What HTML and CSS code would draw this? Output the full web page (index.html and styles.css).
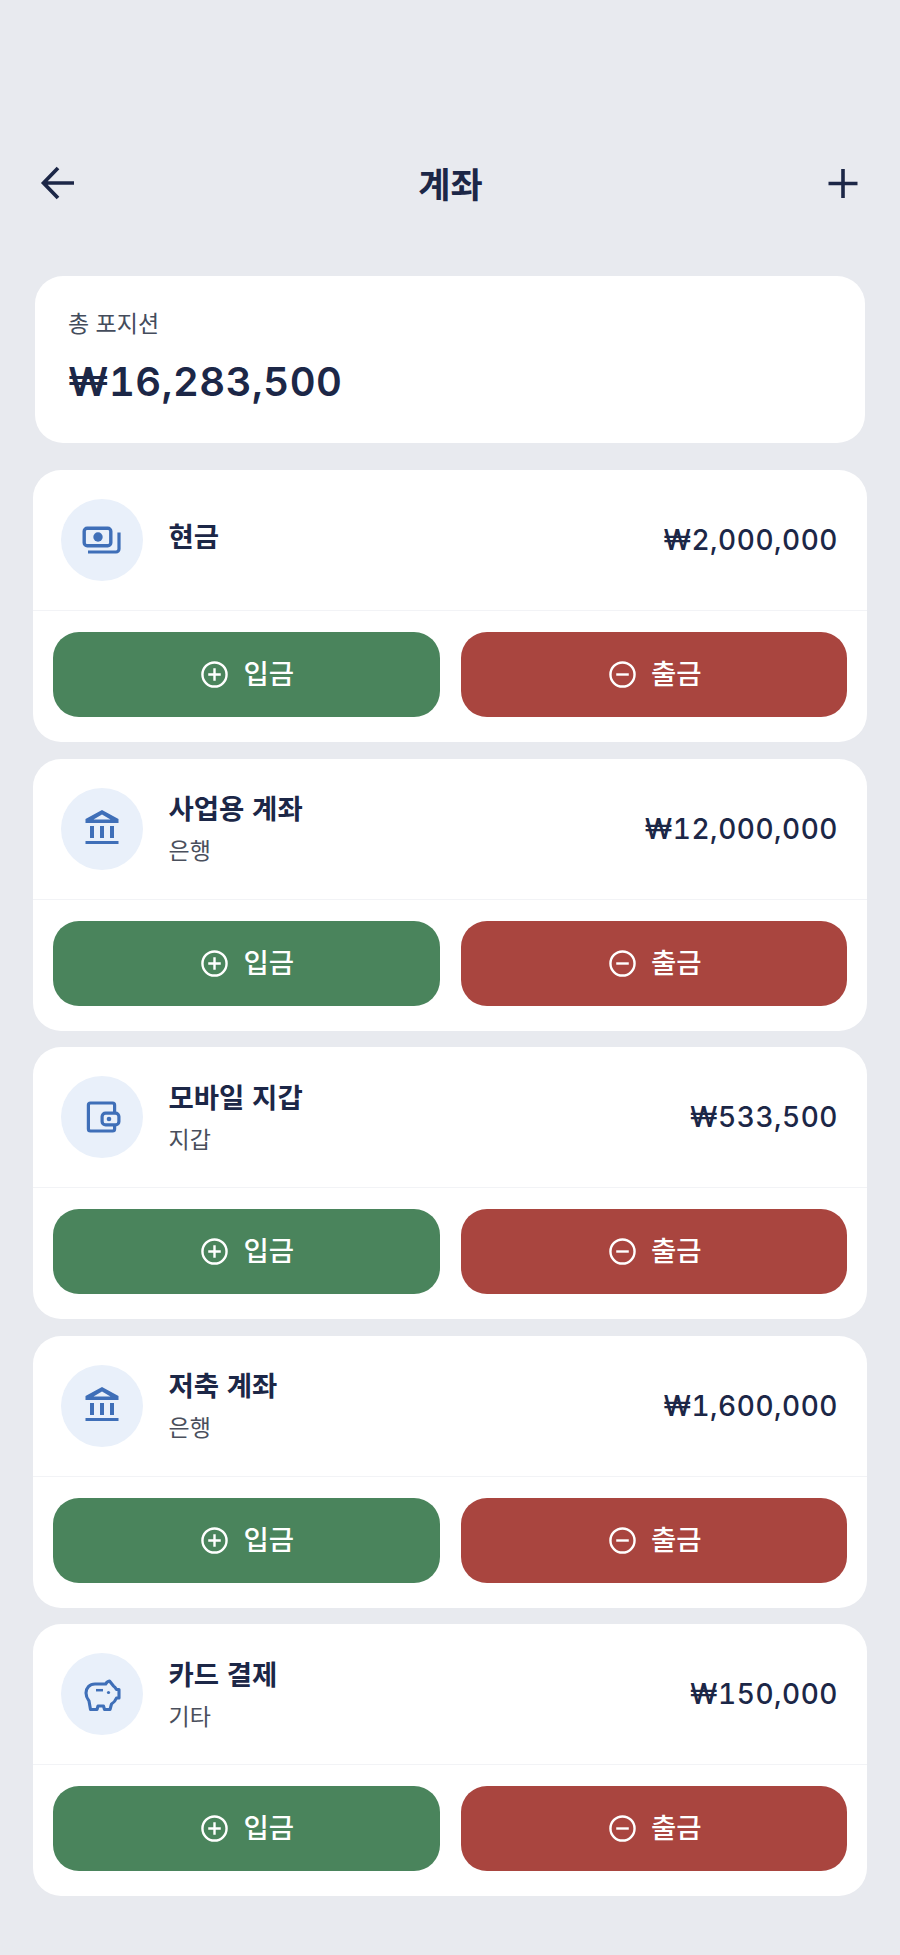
FILE: index.html
```html
<!DOCTYPE html>
<html lang="ko">
<head>
    <meta charset="UTF-8">
    <meta name="viewport" content="width=device-width, initial-scale=1.0">
    <title>계좌</title>
    <link rel="stylesheet" href="styles.css">
</head>
<body>

    <!-- Icons -->
    <svg class="icon-defs" aria-hidden="true">
        <symbol id="i-cash" viewBox="0 0 40 40">
            <rect x="2.200" y="8.200" width="26.600" height="17.600" rx="3" fill="none" stroke="currentColor" stroke-width="3.400"/>
            <circle cx="16" cy="17" r="4.700" fill="currentColor"/>
            <path d="M37 12.500V29a3 3 0 0 1-3 3H6" fill="none" stroke="currentColor" stroke-width="3.200"/>
        </symbol>
        <symbol id="i-bank" viewBox="0 0 40 40">
            <path d="M20 1 36.500 10v4h-33v-4z M20 5.500 11.500 10.500h17z" fill="currentColor" fill-rule="evenodd"/>
            <path d="M10 17v12M20 17v12M30 17v12" fill="none" stroke="currentColor" stroke-width="4"/>
            <path d="M3.500 33.500h33" fill="none" stroke="currentColor" stroke-width="3.200"/>
        </symbol>
        <symbol id="i-wallet" viewBox="0 0 40 40">
            <path d="M32.600 16V8a2 2 0 0 0-2-2H8.400a2 2 0 0 0-2 2v24a2 2 0 0 0 2 2h22.200a2 2 0 0 0 2-2v-4" fill="none" stroke="currentColor" stroke-width="3.200"/>
            <rect x="20.100" y="16.100" width="16.800" height="11.800" rx="3.500" fill="none" stroke="currentColor" stroke-width="3.200"/>
            <circle cx="27" cy="22" r="2.300" fill="currentColor"/>
        </symbol>
        <symbol id="i-piggy" viewBox="0 0 40 40">
            <path d="M27.500 7c-1.500.2-3 1.300-3.800 3H13C7.500 10 4 14 4 19c0 3.500 1.500 6 3 8l1.500 8.500H15l1-3.500h5.500l1 3.500H28l1.500-5.500c2.500-1.500 4-3.500 5-6H37v-8.500h-2.500c-.8-1.500-1.500-2.500-3-3.500z" fill="none" stroke="currentColor" stroke-width="3.100" stroke-linejoin="round"/>
            <path d="M14 16.200h7" fill="none" stroke="currentColor" stroke-width="2.500"/>
            <circle cx="26.500" cy="18.500" r="1.600" fill="currentColor"/>
        </symbol>
        <symbol id="i-plus" viewBox="0 0 28 28">
            <circle cx="14" cy="14" r="12.500" fill="none" stroke="currentColor" stroke-width="2.500"/>
            <path d="M14 7.500v13M7.500 14h13" fill="none" stroke="currentColor" stroke-width="2.500"/>
        </symbol>
        <symbol id="i-minus" viewBox="0 0 28 28">
            <circle cx="14" cy="14" r="12.500" fill="none" stroke="currentColor" stroke-width="2.500"/>
            <path d="M7.500 14h13" fill="none" stroke="currentColor" stroke-width="2.500"/>
        </symbol>
    </svg>

    <!-- Header -->
    <header class="top-bar">
        <svg class="top-icon" viewBox="0 0 36 36" aria-hidden="true">
            <path d="M34 18H4M18 3 3.500 18 18 33" fill="none" stroke="currentColor" stroke-width="3.700"/>
        </svg>
        <h1 class="top-title">계좌</h1>
        <svg class="top-icon" viewBox="0 0 36 36" aria-hidden="true">
            <path d="M18 4v29M3.500 18.500h29" fill="none" stroke="currentColor" stroke-width="3.600"/>
        </svg>
    </header>

    <!-- Total -->
    <section class="summary">
        <p class="summary-label">총 포지션</p>
        <p class="summary-value">₩16,283,500</p>
    </section>

    <!-- Accounts -->
    <main class="accounts">
        <article class="account">
            <div class="account-row">
                <span class="account-icon"><svg><use href="#i-cash"/></svg></span>
                <div class="account-info account-info-single">
                    <h2 class="account-name">현금</h2>
                </div>
                <span class="account-amount">₩2,000,000</span>
            </div>
            <div class="account-actions">
                <button class="btn btn-in"><svg><use href="#i-plus"/></svg><span class="btn-text">입금</span></button>
                <button class="btn btn-out"><svg><use href="#i-minus"/></svg><span class="btn-text">출금</span></button>
            </div>
        </article>

        <article class="account">
            <div class="account-row">
                <span class="account-icon"><svg><use href="#i-bank"/></svg></span>
                <div class="account-info">
                    <h2 class="account-name">사업용 계좌</h2>
                    <p class="account-type">은행</p>
                </div>
                <span class="account-amount">₩12,000,000</span>
            </div>
            <div class="account-actions">
                <button class="btn btn-in"><svg><use href="#i-plus"/></svg><span class="btn-text">입금</span></button>
                <button class="btn btn-out"><svg><use href="#i-minus"/></svg><span class="btn-text">출금</span></button>
            </div>
        </article>

        <article class="account">
            <div class="account-row">
                <span class="account-icon"><svg><use href="#i-wallet"/></svg></span>
                <div class="account-info">
                    <h2 class="account-name">모바일 지갑</h2>
                    <p class="account-type">지갑</p>
                </div>
                <span class="account-amount">₩533,500</span>
            </div>
            <div class="account-actions">
                <button class="btn btn-in"><svg><use href="#i-plus"/></svg><span class="btn-text">입금</span></button>
                <button class="btn btn-out"><svg><use href="#i-minus"/></svg><span class="btn-text">출금</span></button>
            </div>
        </article>

        <article class="account">
            <div class="account-row">
                <span class="account-icon"><svg><use href="#i-bank"/></svg></span>
                <div class="account-info">
                    <h2 class="account-name">저축 계좌</h2>
                    <p class="account-type">은행</p>
                </div>
                <span class="account-amount">₩1,600,000</span>
            </div>
            <div class="account-actions">
                <button class="btn btn-in"><svg><use href="#i-plus"/></svg><span class="btn-text">입금</span></button>
                <button class="btn btn-out"><svg><use href="#i-minus"/></svg><span class="btn-text">출금</span></button>
            </div>
        </article>

        <article class="account">
            <div class="account-row">
                <span class="account-icon"><svg><use href="#i-piggy"/></svg></span>
                <div class="account-info">
                    <h2 class="account-name">카드 결제</h2>
                    <p class="account-type">기타</p>
                </div>
                <span class="account-amount">₩150,000</span>
            </div>
            <div class="account-actions">
                <button class="btn btn-in"><svg><use href="#i-plus"/></svg><span class="btn-text">입금</span></button>
                <button class="btn btn-out"><svg><use href="#i-minus"/></svg><span class="btn-text">출금</span></button>
            </div>
        </article>
    </main>

</body>
</html>
```

FILE: styles.css
```css
body {
    margin: 0;
    padding: 0 33px;
    background-color: #e8eaef;
    color: #1c2747;
    font-family: Inter, "Noto Sans CJK KR", sans-serif;
    font-variant-numeric: tabular-nums;
}

p, h1, h2 {
    margin: 0;
}

.icon-defs {
    display: none;
}

/* Header */
.top-bar {
    display: flex;
    align-items: center;
    justify-content: space-between;
    height: 60px;
    padding: 153px 6px 0 7px;
}

.top-icon {
    width: 36px;
    height: 36px;
    color: #1c2747;
}

.top-title {
    font-family: "Noto Sans CJK KR", sans-serif;
    font-size: 35px;
    font-weight: 700;
    line-height: 58px;
}

/* Total */
.summary {
    box-sizing: border-box;
    height: 167px;
    margin: 63px 2px 27px;
    padding: 30px 33px 0;
    background: #ffffff;
    border-radius: 28px;
}

.summary-label {
    font-family: "Noto Sans CJK KR", sans-serif;
    font-size: 23px;
    line-height: 32px;
    color: #444c5c;
}

.summary-value {
    margin-top: 18px;
    font-size: 40px;
    font-weight: 600;
    line-height: 52px;
    letter-spacing: 0.5px;
}

/* Accounts */
.accounts {
    display: flex;
    flex-direction: column;
    gap: 16.600px;
}

.account {
    background: #ffffff;
    border-radius: 28px;
}

.account-row {
    display: flex;
    box-sizing: border-box;
    align-items: center;
    height: 141px;
    padding: 0 29px 0 28px;
    border-bottom: 1px solid #f2f3f6;
}

.account-icon {
    display: flex;
    flex: none;
    align-items: center;
    justify-content: center;
    width: 82px;
    height: 82px;
    border-radius: 50%;
    background: #e9f0fa;
    color: #3f6fb8;
}

.account-icon svg {
    width: 40px;
    height: 40px;
}

.account-info {
    flex: 1;
    margin-left: 25.500px;
    font-family: "Noto Sans CJK KR", sans-serif;
}

.account-info-single {
    margin-top: -8px;
}

.account-name {
    margin-top: -3px;
    font-size: 27.500px;
    font-weight: 600;
    line-height: 36px;
}

.account-type {
    margin-top: 8px;
    font-size: 23px;
    line-height: 32px;
    color: #4a4f5c;
}

.account-amount {
    font-size: 28px;
    font-weight: 500;
    letter-spacing: 0.5px;
}

.account-actions {
    display: flex;
    gap: 21px;
    padding: 21px 20px 25px;
}

.btn {
    display: flex;
    flex: 1;
    align-items: center;
    justify-content: center;
    gap: 15px;
    height: 85px;
    padding: 0 0 0 3px;
    border: none;
    border-radius: 26px;
    color: #ffffff;
    font-family: "Noto Sans CJK KR", sans-serif;
    font-size: 27.500px;
    font-weight: 500;
}

.btn svg {
    width: 27px;
    height: 27px;
}

.btn-text {
    margin-bottom: 5px;
}

.btn-in {
    background-color: #4a845c;
}

.btn-out {
    background-color: #a9453f;
}
```
